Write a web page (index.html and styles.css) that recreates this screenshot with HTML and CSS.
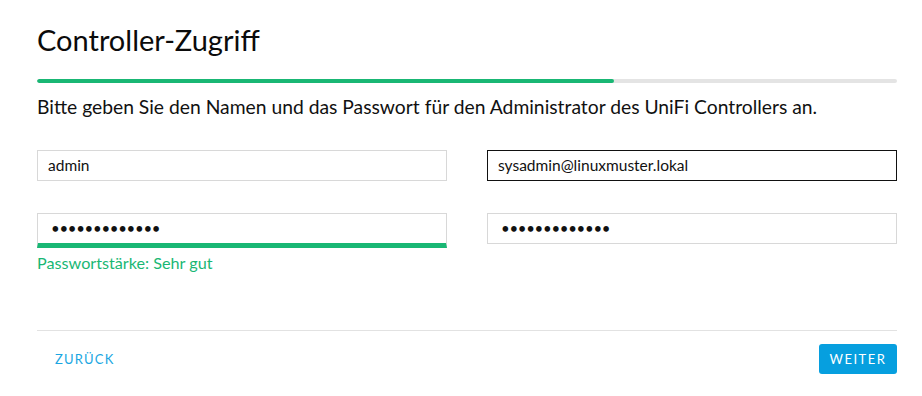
FILE: index.html
```html
<!DOCTYPE html>
<html lang="de">
<head>
<meta charset="utf-8">
<title>Controller-Zugriff</title>
<link rel="stylesheet" href="styles.css">
</head>
<body>
<main class="wizard">
  <h1 class="title">Controller-Zugriff</h1>
  <div class="progress"><div class="progress-fill" style="width: 67.1%"></div></div>
  <p class="intro">Bitte geben Sie den Namen und das Passwort für den Administrator des UniFi Controllers an.</p>
  <div class="form-grid">
    <div class="field">
      <div class="input">admin</div>
    </div>
    <div class="field">
      <div class="input input-focus">sysadmin@linuxmuster.lokal</div>
    </div>
    <div class="field">
      <div class="input input-pw input-strong">•••••••••••••</div>
      <div class="strength">Passwortstärke: Sehr gut</div>
    </div>
    <div class="field">
      <div class="input input-pw">•••••••••••••</div>
    </div>
  </div>
  <div class="footer">
    <button class="btn-back">ZURÜCK</button>
    <button class="btn-next">WEITER</button>
  </div>
</main>
</body>
</html>
```

FILE: styles.css
```css
* { box-sizing: border-box; }
html, body { margin: 0; background: #fff; }
body { font-family: Lato, "Open Sans", sans-serif; color: #111; }
.wizard { width: 860px; margin-left: 37px; padding-top: 21px; }
.title { margin: 0; font-size: 29px; font-weight: 400; line-height: 38px; color: #0b0b0b; }
.progress { margin-top: 20px; height: 4px; background: #e4e4e4; border-radius: 2px; overflow: hidden; }
.progress-fill { height: 100%; background: #19b774; border-radius: 2px; }
.intro { margin: 11px 0 0; font-size: 19.3px; line-height: 26px; color: #111; }
.form-grid { margin-top: 30px; display: grid; grid-template-columns: 410px 410px; column-gap: 40px; row-gap: 32px; align-items: start; }
.input { height: 31px; border: 1px solid #d8d8d8; padding: 0 10px; font-size: 15.5px; line-height: 29px; color: #111; background: #fff; white-space: nowrap; }
.input-focus { border-color: #111; }
.input-pw { font-size: 15px; letter-spacing: -0.3px; padding-left: 13px; }
.input-strong { border-bottom: 5px solid #19b774; height: 35px; }
.strength { margin-top: 4px; font-size: 16.2px; line-height: 22px; color: #19b774; }
.footer { margin-top: 56px; border-top: 1px solid #e2e2e2; padding-top: 13px; display: flex; justify-content: space-between; align-items: center; }
.btn-back { background: none; border: 0; padding: 0 18px; height: 30px; font-family: inherit; font-size: 13px; letter-spacing: 1.2px; color: #1aa6e2; }
.btn-next { background: #069fdf; border: 0; border-radius: 3px; height: 30px; width: 78px; padding: 0; font-family: inherit; font-size: 13px; letter-spacing: 1.5px; color: #fff; }
```
